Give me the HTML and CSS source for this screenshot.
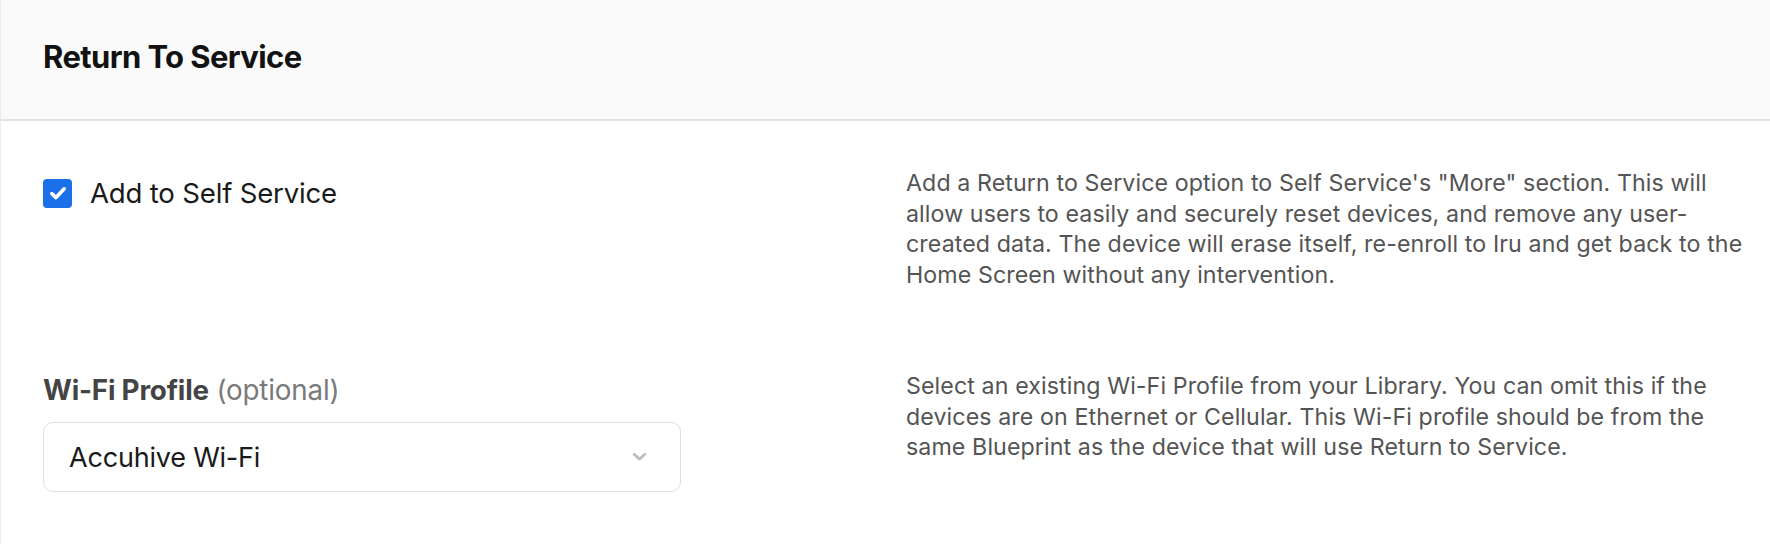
FILE: index.html
```html
<!DOCTYPE html>
<html lang="en">
<head>
<meta charset="utf-8">
<title>Return To Service</title>
<link rel="stylesheet" href="styles.css">
</head>
<body>
<div class="panel">
  <header class="panel-header">
    <h1 class="panel-title">Return To Service</h1>
  </header>
  <section class="panel-body">
    <div class="row">
      <div class="control">
        <label class="checkbox">
          <span class="checkbox-box">
            <svg viewBox="0 0 28 28" width="28" height="28" aria-hidden="true">
              <path d="M7.8 14.6 L12 18.6 L20.2 9.8" fill="none" stroke="#fff" stroke-width="3.6" stroke-linecap="round" stroke-linejoin="round"/>
            </svg>
          </span>
          <span class="checkbox-label">Add to Self Service</span>
        </label>
      </div>
      <p class="help">Add a Return to Service option to Self Service's "More" section. This will allow users to easily and securely reset devices, and remove any user-created data. The device will erase itself, re-enroll to Iru and get back to the Home Screen without any intervention.</p>
    </div>
    <div class="row row-wifi">
      <div class="control">
        <div class="field-label"><strong>Wi-Fi Profile</strong> <span class="optional">(optional)</span></div>
        <div class="select">
          <span class="select-value">Accuhive Wi-Fi</span>
          <svg class="select-chevron" viewBox="0 0 14 9" width="15" height="10" aria-hidden="true">
            <path d="M2 2 L7 6.5 L12 2" fill="none" stroke="#bdbdbd" stroke-width="2.6" stroke-linecap="round" stroke-linejoin="round"/>
          </svg>
        </div>
      </div>
      <p class="help">Select an existing Wi-Fi Profile from your Library. You can omit this if the devices are on Ethernet or Cellular. This Wi-Fi profile should be from the same Blueprint as the device that will use Return to Service.</p>
    </div>
  </section>
</div>
</body>
</html>
```

FILE: styles.css
```css
* { box-sizing: border-box; }

html, body {
  margin: 0;
  padding: 0;
  background: #ffffff;
}

body {
  font-family: Inter, "Noto Sans", sans-serif;
  color: #1a1a1a;
  width: 1770px;
  height: 544px;
  overflow: hidden;
}

.panel {
  border-left: 1px solid #ececec;
  height: 544px;
}

.panel-header {
  height: 121px;
  background: #fafafa;
  border-bottom: 2px solid #e2e2e2;
  display: flex;
  align-items: center;
  padding: 0 0 6px 42px;
}

.panel-title {
  margin: 0;
  font-size: 31px;
  font-weight: 700;
  letter-spacing: -0.6px;
  color: #121212;
}

.panel-body {
  padding: 47px 20px 0 42px;
  display: flex;
  flex-direction: column;
  gap: 81px;
}

.row {
  display: grid;
  grid-template-columns: 1fr 1fr;
  column-gap: 19px;
}

.control {
  display: flex;
  flex-direction: column;
}

.checkbox {
  display: flex;
  align-items: center;
  gap: 18px;
  margin-top: 8px;
}

.checkbox-box {
  width: 29px;
  height: 29px;
  border-radius: 4px;
  background: #1b6fe8;
  display: flex;
  align-items: center;
  justify-content: center;
}

.checkbox-label {
  font-size: 27.6px;
  color: #1a1a1a;
  letter-spacing: -0.2px;
}

.help {
  margin: 0;
  font-size: 23.2px;
  line-height: 30.5px;
  color: #545454;
  letter-spacing: 0.1px;
}

.field-label {
  font-size: 27.8px;
  color: #444444;
  margin-top: 2px;
  letter-spacing: -0.2px;
}

.field-label strong {
  font-weight: 700;
  color: #444444;
}

.optional {
  color: #7a7a7a;
  font-weight: 400;
}

.select {
  margin-top: 15px;
  width: 638px;
  height: 70px;
  border: 1.5px solid #dedede;
  border-radius: 10px;
  display: flex;
  align-items: center;
  justify-content: space-between;
  padding: 0 33px 0 25px;
  background: #fff;
}

.select-value {
  font-size: 27px;
  color: #1a1a1a;
  letter-spacing: -0.2px;
}
```
